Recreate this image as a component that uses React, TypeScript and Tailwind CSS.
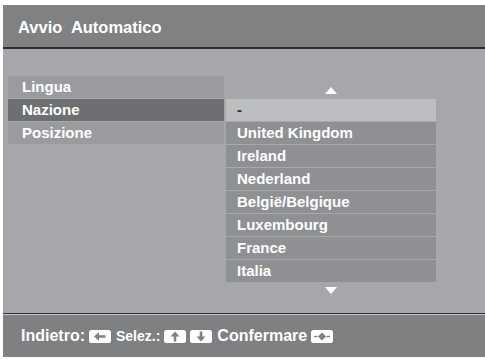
import React from 'react';

const FONT = { fontFamily: '"Liberation Sans", Arial, sans-serif' };

const MENU = ['Lingua', 'Nazione', 'Posizione'];
const COUNTRIES = ['United Kingdom', 'Ireland', 'Nederland', 'België/Belgique', 'Luxembourg', 'France', 'Italia'];

// tasto bianco del telecomando con freccia
function Key({ dir }: { dir: 'left' | 'up' | 'down' | 'ok' }) {
  return (
    <svg width="22" height="13" viewBox="0 0 22 13" className="shrink-0">
      <rect x="0" y="0" width="22" height="13" rx="2.5" fill="#ffffff" />
      {dir === 'left' && (
        <g fill="#7f8082">
          <polygon points="5,6.5 10,2 10,11" />
          <rect x="9.5" y="5.2" width="7" height="2.6" />
        </g>
      )}
      {dir === 'up' && (
        <g fill="#7f8082">
          <polygon points="11,1.5 15.5,6.5 6.5,6.5" />
          <rect x="9.7" y="6" width="2.6" height="5.5" />
        </g>
      )}
      {dir === 'down' && (
        <g fill="#7f8082">
          <polygon points="11,11.5 15.5,6.5 6.5,6.5" />
          <rect x="9.7" y="1.5" width="2.6" height="5.5" />
        </g>
      )}
      {dir === 'ok' && (
        <g fill="#7f8082">
          <polygon points="11,2.5 15,6.5 11,10.5 7,6.5" />
          <rect x="3" y="5.8" width="3.5" height="1.4" />
          <rect x="15.5" y="5.8" width="3.5" height="1.4" />
        </g>
      )}
    </svg>
  );
}

export default function App() {
  return (
    <div className="w-[485px] h-[359px] bg-white pt-[5px] pl-[3px] pb-[2px] flex flex-col overflow-hidden" style={FONT}>
      {/* intestazione */}
      <div className="h-[44px] shrink-0 bg-[#808183] flex items-center pl-[15px] pt-[2px] border-b-[2px] border-[#2e2e30]">
        <span className="text-white font-bold text-[16.5px] whitespace-pre">Avvio  Automatico</span>
      </div>

      {/* corpo */}
      <div className="flex-1 bg-[#a6a7aa] flex items-start pt-[27px] pl-[5px]">
        <div className="w-[216px] flex flex-col gap-px">
          {MENU.map((m, i) => (
            <div
              key={m}
              className={`h-[22px] flex items-center pl-[14px] text-white font-bold text-[15px] ${i === 1 ? 'bg-[#6e6f71]' : 'bg-[#9a9b9e]'}`}
            >
              {m}
            </div>
          ))}
        </div>

        <div className="w-[210px] ml-[2px] flex flex-col">
          <div className="h-[23px] flex items-center justify-center pt-[5px]">
            <svg width="12" height="7" viewBox="0 0 12 7">
              <polygon points="6,0 12,7 0,7" fill="#ffffff" />
            </svg>
          </div>
          <div className="flex flex-col gap-px bg-[#a8a9ac]">
            <div className="h-[22px] bg-[#bdbec0] flex items-center pl-[11px] text-[#2a2a2a] font-bold text-[15px]">-</div>
            {COUNTRIES.map((c) => (
              <div key={c} className="h-[22px] bg-[#8f9093] flex items-center pl-[11px] text-white font-bold text-[15px]">
                {c}
              </div>
            ))}
          </div>
          <div className="h-[14px] flex items-center justify-center pt-[2px]">
            <svg width="12" height="7" viewBox="0 0 12 7">
              <polygon points="0,0 12,0 6,7" fill="#ffffff" />
            </svg>
          </div>
        </div>
      </div>

      {/* piede */}
      <div className="shrink-0 border-t border-[#2e2e30]">
        <div className="h-px bg-[#c9cacc]" />
        <div className="h-[42px] bg-[#7f8082] flex items-center pl-[18px] text-white font-bold gap-[4px]">
          <span className="text-[16px]">Indietro:</span>
          <Key dir="left" />
          <span className="text-[14px] ml-[1px]">Selez.:</span>
          <Key dir="up" />
          <Key dir="down" />
          <span className="text-[16px] ml-[1px]">Confermare</span>
          <Key dir="ok" />
        </div>
      </div>
    </div>
  );
}
